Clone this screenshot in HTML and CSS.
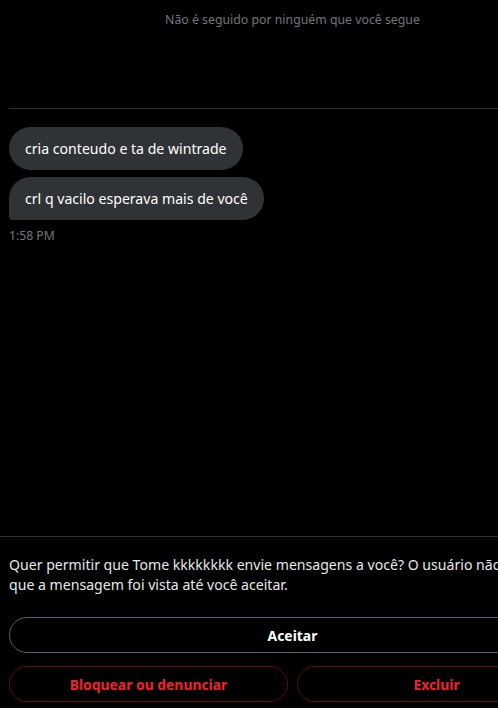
FILE: index.html
```html
<!DOCTYPE html>
<html lang="pt">
<head>
<meta charset="utf-8">
<link rel="stylesheet" href="styles.css">
</head>
<body>
<div class="panel">
  <div class="header">
    <p class="follow-note">Não é seguido por ninguém que você segue</p>
  </div>
  <div class="messages">
    <div class="bubble">cria conteudo e ta de wintrade</div>
    <div class="bubble">crl q vacilo esperava mais de você</div>
    <div class="time">1:58 PM</div>
  </div>
  <div class="request">
    <p class="request-text">Quer permitir que Tome kkkkkkkk envie mensagens a você? O usuário não saberá que a mensagem foi vista até você aceitar.</p>
    <button class="btn btn-accept">Aceitar</button>
    <div class="btn-row">
      <button class="btn btn-danger">Bloquear ou denunciar</button>
      <button class="btn btn-danger">Excluir</button>
    </div>
  </div>
</div>
</body>
</html>
```
FILE: styles.css
```css
html, body {
  margin: 0;
  padding: 0;
  background: #000;
  overflow: hidden;
}
body {
  font-family: "Noto Sans", "Open Sans", sans-serif;
  color: #e7e9ea;
  width: 498px;
  height: 708px;
}
.panel {
  width: 576px;
  height: 708px;
  display: flex;
  flex-direction: column;
}
.header {
  margin-left: 9px;
  height: 108px;
  border-bottom: 1px solid #2f3336;
  display: flex;
  justify-content: center;
}
.follow-note {
  margin: 11px 0 0;
  font-size: 12.3px;
  line-height: 18px;
  color: #71767b;
}
.messages {
  flex: 1;
  padding: 18px 0 0 9px;
  display: flex;
  flex-direction: column;
  align-items: flex-start;
  gap: 7px;
}
.bubble {
  background: #2f3336;
  color: #fff;
  font-size: 14.1px;
  line-height: 20px;
  padding: 12px 16px 11px;
  border-radius: 22px;
  border-bottom-left-radius: 4px;
}
.bubble:first-child {
  border-bottom-left-radius: 22px;
}
.time {
  font-size: 12.2px;
  line-height: 16px;
  color: #71767b;
  margin-top: 1px;
}
.request {
  border-top: 1px solid #2f3336;
  padding: 18px 0 6px 9px;
}
.request-text {
  margin: 0 0 22px;
  font-size: 14.1px;
  line-height: 20px;
  color: #e7e9ea;
  width: 548px;
}
.btn {
  font-family: inherit;
  font-size: 13.9px;
  font-weight: 700;
  background: transparent;
  border-radius: 9999px;
  height: 36px;
  cursor: pointer;
  padding: 0 16px;
}
.btn-accept {
  display: block;
  width: 567px;
  border: 1px solid #536471;
  color: #fff;
}
.btn-row {
  margin-top: 13px;
  display: flex;
  gap: 9px;
  width: 567px;
}
.btn-danger {
  flex: 1;
  border: 1px solid #67070f;
  color: #f4212e;
}
```
